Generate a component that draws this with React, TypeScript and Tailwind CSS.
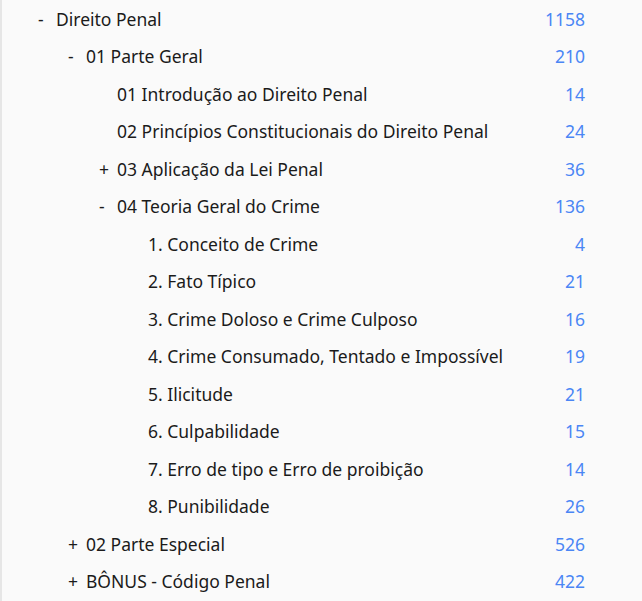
import React from "react";

type Item = { label: string; count: number; level: number; sign?: "+" | "-" };

const items: Item[] = [
  { label: "Direito Penal", count: 1158, level: 0, sign: "-" },
  { label: "01 Parte Geral", count: 210, level: 1, sign: "-" },
  { label: "01 Introdução ao Direito Penal", count: 14, level: 2 },
  { label: "02 Princípios Constitucionais do Direito Penal", count: 24, level: 2 },
  { label: "03 Aplicação da Lei Penal", count: 36, level: 2, sign: "+" },
  { label: "04 Teoria Geral do Crime", count: 136, level: 2, sign: "-" },
  { label: "1. Conceito de Crime", count: 4, level: 3 },
  { label: "2. Fato Típico", count: 21, level: 3 },
  { label: "3. Crime Doloso e Crime Culposo", count: 16, level: 3 },
  { label: "4. Crime Consumado, Tentado e Impossível", count: 19, level: 3 },
  { label: "5. Ilicitude", count: 21, level: 3 },
  { label: "6. Culpabilidade", count: 15, level: 3 },
  { label: "7. Erro de tipo e Erro de proibição", count: 14, level: 3 },
  { label: "8. Punibilidade", count: 26, level: 3 },
  { label: "02 Parte Especial", count: 526, level: 1, sign: "+" },
  { label: "BÔNUS - Código Penal", count: 422, level: 1, sign: "+" },
];

// indent per level (measured from inside the 2px left border)
const indent = ["pl-[54px]", "pl-[84px]", "pl-[115px]", "pl-[146px]"];

export default function App() {
  return (
    <div
      className="w-[642px] h-[601px] bg-[#fafafa] border-l-2 border-[#e6e6e6] overflow-hidden"
      style={{ fontFamily: '"Noto Sans", "Open Sans", sans-serif' }}
    >
      <ul className="flex flex-col">
        {items.map((it, i) => (
          <li
            key={i}
            className={`h-[37.5px] flex items-center justify-between pr-[57px] text-[17.5px] text-[#1b1b1b] ${indent[it.level]}`}
          >
            <span className="relative">
              {it.sign && (
                <span className="absolute left-[-18px] top-0">{it.sign}</span>
              )}
              {it.label}
            </span>
            <span className="text-[#4a86f5]">{it.count}</span>
          </li>
        ))}
      </ul>
    </div>
  );
}
